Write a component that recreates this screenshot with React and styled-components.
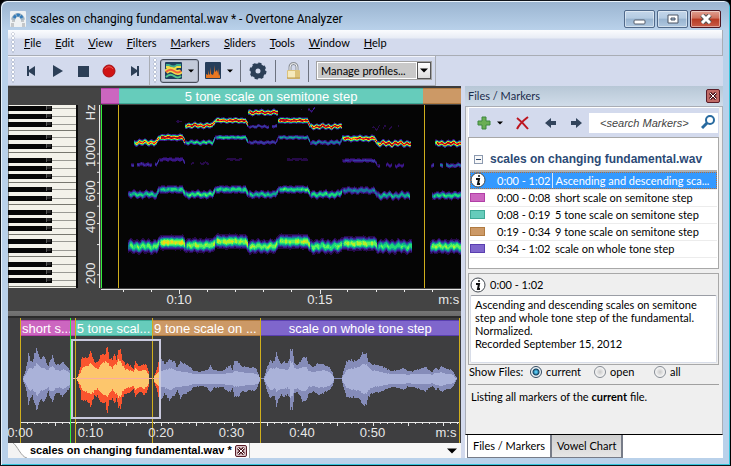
import React, { useState } from 'react';
import styled, { createGlobalStyle } from 'styled-components';

const palette = {
  frame: '#b9d1ea',
  bar: '#d3daed',
  line: '#a9adb5',
  dark: '#444444',
  plot: '#050505',
  navy: '#2c3f57',
  gold: '#cfae1c',
  green: '#34f03c',
};

const markerColors = {
  pink: ['#cc66c0', '#b23fa6'],
  teal: ['#66ccbb', '#3fa896'],
  orange: ['#cc9966', '#b07a40'],
  purple: ['#7f66cc', '#5a3fb0'],
};

const chartFont = `'Liberation Sans', Arial, sans-serif`;

const GlobalStyle = createGlobalStyle`
  * {
    box-sizing: border-box;
  }

  body {
    margin: 0;
    background-color: #000;
    font-family: Lato, sans-serif;
    font-size: 11px;
    color: #000;
  }

  button, input, select {
    margin: 0;
    font: inherit;
    color: inherit;
  }
`;

/* window frame */

const WindowFrame = styled.div`
  display: flex;
  flex-direction: column;
  min-height: 100vh;
  padding: 0 7px 7px 6px;
  border: 1px solid #10151c;
  border-right-color: #000;
  border-radius: 7px 7px 0 0;
  background: linear-gradient(#9ab4d0, ${palette.frame} 29px);
  box-shadow: inset 1px 1px 0 #e8f2fb, inset -1px -1px 0 #35c5dc;
`;

const TitleBar = styled.header`
  display: flex;
  align-items: center;
  height: 29px;
  gap: 4px;
  padding: 6px 2px 0 3px;
`;

const TitleText = styled.h1`
  flex: 1;
  margin: 0;
  font-family: Roboto, sans-serif;
  font-weight: 400;
  font-size: 12px;
  line-height: 18px;
  color: #000;
  white-space: nowrap;
`;

const WindowButtons = styled.div`
  display: flex;
  gap: 2px;
`;

const WindowButton = styled.button`
  display: grid;
  place-items: center;
  width: 31px;
  height: 18px;
  padding: 0;
  border: 1px solid ${props => (props.$close ? '#4d1520' : '#50698a')};
  border-radius: 2px;
  background: ${props =>
    props.$close
      ? 'linear-gradient(#e0a092, #d0705c 45%, #b83a22 50%, #c85c48)'
      : 'linear-gradient(#c3d6ea, #b4cbe2 45%, #98b4d0 50%, #b0c8e0)'};
  box-shadow: inset 0 0 0 1px rgba(255, 255, 255, 0.45);
`;

const WindowBody = styled.div`
  flex: 1;
  display: flex;
  flex-direction: column;
  margin-left: 1px;
  background-color: ${palette.bar};
`;

/* menu and toolbar */

const Grip = styled.span`
  align-self: stretch;
  width: 4px;
  margin: 2px 3px 2px 0;
  background-image: radial-gradient(circle, #fff 1px, #a4abbc 1px, transparent 2px);
  background-size: 4px 4px;
`;

const MenuBar = styled.nav`
  display: flex;
  align-items: center;
  height: 26px;
  gap: 14px;
  padding: 0 3px;
  border: 1px solid ${palette.line};
  border-width: 0 1px 1px 0;
  background: linear-gradient(#fbfcfe, #e8ecf5 8px, ${palette.bar} 9px);
`;

const MenuItem = styled.button`
  padding: 0;
  border: 0;
  background: none;
  line-height: 16px;

  &::first-letter {
    text-decoration: underline;
  }
`;

const MenuGrip = styled(Grip)`
  margin-right: -5px;
`;

const ToolBars = styled.div`
  display: flex;
  height: 30px;
`;

const ToolBar = styled.div`
  display: flex;
  align-items: center;
  padding: 0 ${props => props.$end}px 0 3px;
  border: 1px solid ${palette.line};
  border-width: 0 1px 1px 0;
  box-shadow: inset 0 1px 0 #f2f4fa;
`;

const ToolButton = styled.button`
  display: flex;
  align-items: center;
  justify-content: center;
  gap: 6px;
  height: 24px;
  width: ${props => props.$width || 26}px;
  padding: 0;
  border: ${props => (props.$pressed ? '1px solid #454b58' : '0')};
  border-radius: 3px;
  background-color: ${props => (props.$pressed ? '#c3cad9' : 'transparent')};
  box-shadow: ${props =>
    props.$pressed ? 'inset 0 0 0 1px #a9b0c0' : 'none'};
`;

const Separator = styled.span`
  width: 1px;
  height: 22px;
  margin: 0 ${props => props.$space || 0}px;
  background-color: #6d7380;
`;

const ProfileBox = styled.span`
  display: flex;
  height: 19px;
  margin-left: 7px;
  border: 1px solid #a2a2a2;
  background-color: #fff;
`;

const ProfileSelect = styled.select`
  width: 100px;
  padding: 0 0 0 3px;
  border: 1px solid #fff;
  border-radius: 0;
  appearance: none;
  background-color: #c9c9c9;
  line-height: 14px;
`;

const SelectArrow = styled.span`
  display: grid;
  place-items: center;
  width: 14px;
  border: 1px solid #555;
  background: linear-gradient(#fff, #dcdcdc);
`;

/* main area */

const MainArea = styled.div`
  flex: 1;
  display: flex;
  gap: 4px;
`;

const DocumentPane = styled.main`
  flex: 453 1 0;
  min-width: 0;
  display: flex;
  flex-direction: column;
`;

const SpectrumPane = styled.section`
  flex: 225 1 225px;
  display: grid;
  grid-template-columns: 70px 23px 1fr;
  grid-template-rows: 17px minmax(0, 1fr) 23px;
  background-color: ${palette.dark};
  border-top: 2px solid #3c3c3c;
`;

const MarkerStrip = styled.div`
  display: flex;
  grid-column: 3;
  height: 16px;
`;

const Marker = styled.div`
  flex: ${props => props.$span} 1 0;
  min-width: 0;
  padding-left: ${props => (props.$center ? 0 : 1)}px;
  border: 1px solid ${props => markerColors[props.$color][1]};
  border-width: 1px 0;
  background-color: ${props => markerColors[props.$color][0]};
  font-family: ${chartFont};
  font-size: 13px;
  line-height: 15px;
  color: #fff;
  text-align: ${props => (props.$center ? 'center' : 'left')};
  white-space: nowrap;
`;

const ChartSvg = styled.svg`
  display: block;
  width: 100%;
  height: 100%;
  min-height: 0;
  font-family: ${chartFont};
  font-size: 13px;
  fill: #e8e8e8;
`;

const PlotCell = styled.div`
  position: relative;
  grid-row: ${props => props.$row};
  grid-column: ${props => props.$column};
`;

const OverlaySvg = styled(ChartSvg)`
  position: absolute;
  inset: 0;
`;

const Splitter = styled.div`
  height: 7px;
  background: linear-gradient(#757575, #6c6c6c 5px, #2b2b2b 5px);
`;

const WavePane = styled.section`
  position: relative;
  flex: 125 1 125px;
  padding: 2px 2px 0 13px;
  background-color: #3e3e40;
`;

const DocumentTabs = styled.footer`
  display: flex;
  align-items: center;
  height: 15px;
  background-color: #f7f7f7;
`;

const DocumentTab = styled.div`
  display: flex;
  align-items: center;
  gap: 3px;
  height: 15px;
  padding-right: 2px;
  border-right: 1px solid #a5a5a5;
  background-color: #fff;
`;

const TabName = styled.strong`
  font-family: ${chartFont};
  line-height: 15px;
  color: #000;
  white-space: nowrap;
`;

const CloseButton = styled.button`
  display: grid;
  place-items: center;
  width: ${props => props.$size || 12}px;
  height: ${props => props.$size || 12}px;
  padding: 0;
  border: 1px solid #5a1c28;
  border-radius: 2px;
  background-color: ${props => (props.$red ? '#c06a66' : '#d8c0c4')};
`;

const TabListButton = styled.button`
  margin-left: auto;
  margin-right: 4px;
  padding: 0;
  border: 0;
  background: none;
  line-height: 0;
`;

/* side panel */

const SidePanel = styled.aside`
  flex: 258 1 0;
  min-width: 0;
  display: flex;
  flex-direction: column;
`;

const PanelHeader = styled.div`
  display: flex;
  align-items: center;
  justify-content: space-between;
  height: 20px;
  padding: 0 3px;
  background: linear-gradient(#b7c7d6, #d0dce9);
  color: #1b2c4c;
`;

const PanelTitle = styled.h2`
  margin: 0;
  font-weight: 400;
  font-size: 11px;
  line-height: 16px;
`;

const PanelBody = styled.div`
  flex: 1;
  display: flex;
  flex-direction: column;
  padding: 0 3px 0 2px;
  border: 1px solid ${palette.line};
  border-bottom-color: #000;
  background-color: #efefef;
`;

const PanelTools = styled.div`
  display: flex;
  align-items: center;
  height: 30px;
  padding: 0 1px 0 4px;
  border: 1px solid #fff;
  border-width: 1px 0 0 1px;
  background-color: ${palette.bar};
`;

const SearchBox = styled.label`
  flex: 1;
  display: flex;
  align-items: center;
  min-width: 0;
  height: 20px;
  padding-right: 2px;
  background-color: #fff;
`;

const SearchInput = styled.input`
  flex: 1;
  min-width: 0;
  padding: 0 0 0 11px;
  border: 0;
  outline: 0;
  background: none;
  font-family: ${chartFont};

  &::placeholder {
    font-style: italic;
    color: #444;
    opacity: 1;
  }
`;

const ListBox = styled.section`
  min-height: 132px;
  padding: 8px 1px 0;
  border: 1px solid #a8a8a8;
  background-color: #fff;
`;

const GroupHeader = styled.div`
  display: flex;
  align-items: center;
  gap: 7px;
  height: 26px;
  padding: 2px 0 0 4px;
  border-bottom: 2px solid #b0b0b0;
`;

const CollapseButton = styled.button`
  display: grid;
  place-items: center;
  width: 9px;
  height: 9px;
  padding: 0;
  border: 1px solid #8c9ab0;
  background-color: #f8f8f8;
`;

const GroupName = styled.h3`
  margin: 0;
  font-family: ${chartFont};
  font-size: 12px;
  line-height: 16px;
  color: #2c4a75;
  white-space: nowrap;
`;

const MarkerTable = styled.table`
  width: 100%;
  table-layout: fixed;
  border-collapse: collapse;
`;

const MarkerRow = styled.tr`
  height: 17px;
  background-color: ${props => (props.$selected ? '#3399ff' : '#fff')};
  color: ${props => (props.$selected ? '#fff' : '#000')};
  outline: ${props => (props.$selected ? '1px dotted #b5703a' : 'none')};
  outline-offset: -1px;
`;

const MarkerCell = styled.td`
  width: ${props => (props.$width ? `${props.$width}px` : 'auto')};
  padding: 0 0 0 ${props => props.$indent || 0}px;
  border-bottom: 1px solid #ececec;
  border-right: ${props => (props.$divider ? '1px solid #d5e6fa' : '0')};
  line-height: 15px;
  white-space: nowrap;
`;

const Swatch = styled.span`
  display: block;
  width: 15px;
  height: 9px;
  border: 1px solid ${props => markerColors[props.$color][1]};
  background-color: ${props => markerColors[props.$color][0]};
`;

const DetailBox = styled.section`
  display: flex;
  flex-direction: column;
  margin-top: 4px;
  padding: 0 1px 1px;
  border: 1px solid #a8a8a8;
`;

const DetailTime = styled.div`
  display: flex;
  align-items: center;
  gap: 4px;
  height: 21px;
`;

const DetailText = styled.p`
  min-height: 68px;
  margin: 0;
  padding: 2px 4px;
  border: 1px solid #d8dde8;
  border-top-color: #9a9da5;
  border-radius: 2px;
  background-color: #fff;
  line-height: 13px;
  white-space: pre-line;
`;

const FilterGroup = styled.fieldset`
  display: flex;
  align-items: center;
  height: 20px;
  margin: 0;
  padding: 0 1px;
  border: 0;
  border-bottom: 1px solid #a0a0a0;
`;

const FilterTitle = styled.span`
  width: 61px;
`;

const FilterLabel = styled.label`
  display: flex;
  align-items: center;
  gap: 4px;
  width: ${props => props.$width}px;
`;

const Radio = styled.input`
  width: 12px;
  height: 12px;
  appearance: none;
  border: 1px solid #858b93;
  border-radius: 50%;
  background: radial-gradient(circle, #c8c8c8, #f5f5f5 65%);

  &:checked {
    border-color: #34495f;
    background: radial-gradient(circle, #55c6f0 1px, #10405f 3px, #f0f5f8 4px);
  }
`;

const ListInfo = styled.p`
  margin: 0;
  padding: 4px 3px;
  line-height: 16px;
`;

const PanelTabs = styled.div`
  display: flex;
  height: 23px;
  padding-left: 2px;
  background-color: #fff;
`;

const PanelTab = styled.button`
  padding: 0 5px;
  border: 1px solid #777c88;
  border-width: 0 2px 1px ${props => (props.$active ? 1 : 0)}px;
  background: ${props =>
    props.$active ? '#fff' : 'linear-gradient(#cfcfcf, #e6e6e6)'};
  line-height: 16px;
  white-space: nowrap;
`;

/* spectrogram */

const noise = (x, seed) => {
  const value = Math.sin(x * 12.9898 + seed * 78.233) * 43758.5453;
  return value - Math.floor(value);
};

// [from, to, y, strength, thickness, wobble, dropout]
const partials = [
  [74, 83, 16, 0.14, 1.3, 0, 0.3],
  [84, 114, 20, 1, 2, 0.8, 0],
  [114, 147, 15, 1, 2, 0.5, 0],
  [147, 176, 21, 0.28, 1.6, 0.8, 0.15],
  [177, 209, 15, 1.05, 2.1, 0.3, 0],
  [209, 241, 21, 1, 2, 0.9, 0],
  [147, 177, 7, 1, 2, 0.7, 0],
  [200, 214, 5, 0.2, 1.2, 2, 0.5],
  [270, 298, 22, 0.14, 1.2, 2, 0.6],
  [33, 58, 37, 0.88, 2.2, 1, 0],
  [58, 84, 32, 1.1, 2.3, 0.4, 0],
  [84, 114, 37, 0.52, 1.9, 0.8, 0],
  [114, 147, 32, 0.5, 1.9, 0.3, 0],
  [147, 177, 37, 0.28, 1.8, 0.6, 0],
  [177, 209, 32, 0.43, 1.8, 0.4, 0],
  [209, 241, 37, 0.37, 2, 0.8, 0],
  [241, 276, 33, 0.95, 2.2, 0.6, 0],
  [276, 310, 38, 1, 2.2, 1.2, 0],
  [334, 360, 38, 1, 2.2, 0.9, 0],
  [28, 58, 59, 0.25, 1.9, 0.7, 0.35],
  [58, 84, 54, 0.22, 2, 0.3, 0],
  [84, 114, 58, 0.13, 1.5, 1, 0.6],
  [125, 147, 54, 0.13, 1.5, 0.3, 0.2],
  [182, 209, 54, 0.13, 1.7, 0.3, 0.25],
  [241, 276, 55, 0.25, 2, 0.4, 0],
  [276, 304, 60, 0.2, 2, 1.2, 0.3],
  [330, 360, 60, 0.34, 2, 0.7, 0.25],
  [27, 58, 89, 0.48, 3, 1, 0],
  [58, 84, 84, 0.5, 3.1, 0.4, 0],
  [84, 114, 89, 0.55, 3, 0.9, 0],
  [114, 147, 84, 0.5, 3.1, 0.5, 0],
  [147, 177, 89, 0.46, 2.9, 0.8, 0],
  [177, 209, 84, 0.52, 3, 0.4, 0],
  [209, 241, 89, 0.5, 3, 1, 0],
  [241, 276, 85, 0.38, 3, 0.8, 0],
  [276, 309, 90, 0.45, 3, 1.3, 0],
  [331, 360, 90, 0.5, 3, 0.8, 0],
  [27, 58, 141, 0.58, 5, 1.2, 0],
  [58, 84, 137, 0.72, 5.2, 0.3, 0],
  [84, 114, 140, 0.64, 5.1, 0.8, 0],
  [114, 147, 136, 0.67, 5.2, 0.5, 0],
  [147, 177, 141, 0.6, 5, 1, 0],
  [177, 209, 136, 0.65, 5.2, 0.4, 0],
  [209, 241, 141, 0.58, 5.1, 1.2, 0],
  [241, 276, 138, 0.64, 5.1, 0.5, 0],
  [276, 311, 141, 0.54, 5, 1.3, 0],
  [329, 360, 141, 0.6, 5.1, 1, 0],
];

const heat = [
  '#12051f', '#260a48', '#38178a', '#353d9e', '#17789a', '#0eab8c',
  '#1fd978', '#5cf25c', '#b5ee2b', '#f7d414', '#f8701a', '#e8181c', '#a80a14',
];

const buildSpectrum = () => {
  const paths = heat.map(() => '');
  partials.forEach(([from, to, y, strength, thickness, wobble, dropout], index) => {
    const next = partials[index + 1];
    const slope = next && next[0] === to ? next[2] - y : 0;
    for (let x = from; x < to; x += 1) {
      const hidden = noise(Math.floor(x / 3), index) < dropout;
      const edge = Math.min(1, 0.6 + (x - from) * 0.2);
      const glide = Math.max(0, 3 - (to - x)) / 3;
      const center =
        y +
        slope * glide +
        wobble * 0.8 * Math.sin(x * 1.05 + index) +
        wobble * 0.5 * Math.sin(x * 0.43 + index * 2);
      const peak = strength * edge * (0.88 + noise(Math.floor(x / 2), index + 3) * 0.2);
      const reach = Math.ceil(thickness * 1.7);
      for (let dy = -reach; dy <= reach && !hidden; dy += 1) {
        const row = Math.round(center) + dy;
        const distance = (row - center) / thickness;
        const value = peak * Math.exp(-distance * distance);
        const level = Math.min(heat.length - 1, Math.floor(value * 13));
        if (level > 0) paths[level] += `M${x} ${row}h1v1h-1z`;
      }
    }
  });
  return paths;
};

const spectrum = buildSpectrum();

const Spectrogram = () => (
  <ChartSvg viewBox='0 0 360 183' preserveAspectRatio='none'>
    <rect width='360' height='183' fill={palette.plot} />
    <g shapeRendering='crispEdges'>
      {spectrum.map((d, index) => (
        <path key={heat[index]} d={d} fill={heat[index]} />
      ))}
      <rect width='1' height='183' fill={palette.green} />
      <rect x='17' width='1' height='183' fill={palette.gold} />
      <rect x='323' width='1' height='183' fill={palette.gold} />
    </g>
  </ChartSvg>
);

/* keyboard */

const blackKeys = [3, 11, 19, 32, 41, 55, 63, 71, 84, 93, 107, 115, 123, 136, 145, 159, 167, 175];
const whiteGaps = [25, 47, 77, 99, 129, 151, 181];

const Keyboard = () => (
  <ChartSvg viewBox='0 0 70 183' preserveAspectRatio='none' shapeRendering='crispEdges'>
    <rect width='70' height='183' fill='#0a0a0a' />
    <rect width='68' height='183' fill='#f3f2ea' />
    <rect width='1' height='183' fill='#8a8a84' />
    {whiteGaps.map(y => (
      <rect key={y} y={y} width='68' height='1' fill='#77776f' />
    ))}
    {blackKeys.map(y => (
      <g key={y}>
        <rect x='40' y={y} width='28' height='1' fill='#9a9a94' />
        <rect y={y - 2} width='44' height='5' fill='#060606' />
        <rect x='38' y={y - 2} width='1' height='4' fill='#5a5a5a' />
        <rect x='39' y={y - 2} width='4' height='3' fill='#242424' />
      </g>
    ))}
  </ChartSvg>
);

const pitchLabels = [
  ['Hz', 4],
  ['1000', 26],
  ['600', 47],
  ['400', 64],
  ['200', 92],
];
const pitchTicks = [26.5, 31.5, 36.5, 42, 48, 55, 64.5, 76, 92.5];

const PitchAxis = () => (
  <ChartSvg>
    {pitchLabels.map(([label, y]) => (
      <svg key={label} x='13' y={`${y}%`} overflow='visible'>
        <text transform='rotate(-90)' textAnchor='middle' y='4'>
          {label}
        </text>
      </svg>
    ))}
    {pitchTicks.map(y => (
      <rect key={y} x='19' y={`${y}%`} width='3' height='1' />
    ))}
    <rect x='21' width='1' height='100%' />
  </ChartSvg>
);

const TimeAxis = () => (
  <ChartSvg shapeRendering='crispEdges'>
    <rect y='1' width='100%' height='1' />
    {[22, 50, 106, 134, 162, 190, 246, 275, 303, 331].map(x => (
      <rect key={x} x={`${x / 3.6}%`} y='2' width='1' height='2' />
    ))}
    {[78, 219].map(x => (
      <rect key={x} x={`${x / 3.6}%`} y='2' width='1' height='4' />
    ))}
    <text x='21.7%' y='16' textAnchor='middle'>0:10</text>
    <text x='60.8%' y='16' textAnchor='middle'>0:15</text>
    <text x='99.5%' y='16' textAnchor='end'>m:s</text>
  </ChartSvg>
);

/* waveform, [x, outer, inner] */

const waveLeft = [
  [14, 0, 0], [17, 8, 4], [19, 17, 8], [20, 25, 10], [22, 19, 12], [24, 16, 10],
  [26, 25, 13], [28, 30, 15], [29, 29, 16], [31, 22, 13], [33, 20, 11], [35, 24, 12],
  [37, 19, 10], [40, 13, 9], [42, 19, 12], [44, 24, 13], [46, 17, 11], [48, 14, 9],
  [51, 14, 8], [54, 18, 10], [57, 14, 9], [60, 11, 7], [62, 7, 5],
];
const waveSelected = [
  [63, 0, 0], [68, 0, 0], [69, 2, 2], [72, 12, 6], [73, 22, 10], [76, 22, 13],
  [78, 20, 12], [81, 25, 15], [82, 29, 16], [84, 22, 14], [86, 17, 12], [89, 17, 10],
  [92, 23, 13], [94, 25, 16], [97, 24, 17], [98, 31, 17], [99, 33, 17], [101, 21, 14],
  [104, 20, 11], [106, 25, 14], [108, 20, 15], [110, 28, 19], [112, 30, 18], [114, 19, 13],
  [117, 15, 10], [120, 15, 9], [125, 10, 7], [127, 18, 11], [130, 14, 9], [132, 13, 8],
  [135, 16, 10], [138, 14, 8], [140, 8, 5], [141, 0, 0], [145, 0, 0], [146, 4, 3],
  [148, 9, 5], [150, 17, 7], [152, 22, 8],
];
const waveRight = [
  [152, 22, 8], [154, 19, 8], [156, 15, 9], [159, 18, 10], [161, 21, 11], [163, 19, 11],
  [166, 17, 9], [169, 11, 8], [172, 19, 8], [174, 16, 7], [179, 14, 7], [182, 12, 6],
  [185, 8, 5], [192, 7, 5], [199, 9, 5], [202, 13, 5], [205, 9, 5], [214, 8, 5],
  [219, 12, 6], [222, 13, 6], [224, 9, 6], [226, 18, 8], [229, 18, 8], [231, 16, 7],
  [234, 12, 7], [237, 13, 6], [241, 11, 6], [245, 12, 6], [248, 10, 5], [250, 5, 4],
  [252, 0, 0], [255, 0, 0], [257, 6, 3], [259, 13, 7], [262, 19, 11], [264, 17, 11],
  [266, 18, 10], [268, 27, 12], [270, 20, 11], [273, 16, 10], [276, 18, 10],
  [279, 16, 9], [281, 19, 11], [282, 30, 18], [284, 30, 17], [286, 15, 11], [289, 14, 10],
  [292, 17, 11], [294, 22, 12], [298, 22, 12], [300, 15, 8], [305, 12, 7], [309, 15, 8],
  [313, 16, 9], [317, 13, 8], [321, 12, 7], [324, 7, 4], [326, 0, 0], [333, 0, 0],
  [335, 8, 4], [338, 18, 9], [342, 19, 10], [346, 18, 11], [351, 20, 12], [354, 26, 15],
  [358, 26, 15], [360, 18, 12], [363, 15, 9], [367, 14, 8], [372, 13, 7], [377, 11, 6],
  [383, 8, 5], [389, 9, 5], [395, 11, 5], [399, 8, 4], [405, 8, 5], [411, 10, 5],
  [417, 12, 5], [421, 9, 5], [424, 7, 4], [427, 11, 6], [430, 9, 6], [433, 13, 7],
  [438, 10, 5], [442, 10, 5], [445, 7, 4], [447, 3, 1], [449, 0, 0], [451, 0, 0],
];

const buildWave = (points, column) => {
  let upper = '';
  const lower = [];
  const middle = 61;
  let segment = 0;
  const first = points[0][0];
  const last = points[points.length - 1][0];
  for (let x = first; x < last; x += 1) {
    while (points[segment + 1][0] <= x) segment += 1;
    const a = points[segment];
    const b = points[segment + 1];
    const t = (x - a[0]) / (b[0] - a[0]);
    const size = a[column] + (b[column] - a[column]) * t;
    const top = middle - Math.round(size * (0.93 + noise(x, 1) * 0.12));
    const bottom = middle + Math.round(size * (0.93 + noise(x, 5) * 0.12));
    upper += `L${x} ${top}H${x + 1}`;
    lower.unshift(`L${x + 1} ${bottom}H${x}`);
  }
  return `M${first} ${middle}${upper}${lower.join('')}Z`;
};

const waves = [
  [waveLeft, '#858cb9', '#aab2d9'],
  [waveSelected, '#fa542e', '#fdc66c'],
  [waveRight, '#858cb9', '#aab2d9'],
];

const secondTicks = Array.from({ length: 62 }, (_, index) => index + 1);
const secondLabels = [['0:00', 0], ['0:10', 10], ['0:20', 20], ['0:30', 30], ['0:40', 40], ['0:50', 50]];

const Waveform = () => (
  <OverlaySvg>
    <svg viewBox='0 0 453 125' preserveAspectRatio='none' width='100%' height='100%'>
      <g shapeRendering='crispEdges'>
        {waves.map(([points, outer, inner], index) => (
          <g key={index}>
            <path d={buildWave(points, 1)} fill={outer} />
            <path d={buildWave(points, 2)} fill={inner} />
          </g>
        ))}
        <rect x='63' y='60' width='89' height='1' fill='#f8b0a0' />
        <rect x='252' y='60' width='4' height='1' fill='#858cb9' />
        <rect x='326' y='60' width='8' height='1' fill='#858cb9' />
        <rect x='12' y='104' width='440' height='1' />
        {secondTicks.map(second => (
          <rect
            key={second}
            x={Math.round(12 + second * 7.05)}
            y='105'
            width='1'
            height={second % 5 ? 1 : 3}
          />
        ))}
        {[12, 67, 144, 252, 451].map(x => (
          <rect key={x} x={x} width='1' height='125' fill={palette.gold} />
        ))}
        <rect x='62' width='1' height='125' fill={palette.green} />
        <rect x='64' y='22' width='88' height='78' fill='none' stroke='#c9c9de' strokeWidth='2' />
      </g>
    </svg>
    {secondLabels.map(([label, second]) => (
      <text key={label} x={`${(12 + second * 7.05) / 4.53}%`} y='119' textAnchor='middle'>
        {label}
      </text>
    ))}
    <text x='99%' y='119' textAnchor='end'>m:s</text>
  </OverlaySvg>
);

/* icons */

const Arrow = ({ width = 6 }) => (
  <svg width={width} height={width / 2 + 1} viewBox='0 0 8 4'>
    <path d='M0 0h8L4 4z' fill='#000' />
  </svg>
);

const LogoIcon = () => (
  <svg width='16' height='16' viewBox='0 0 16 16'>
    <rect width='16' height='16' rx='1' fill='#eef1f3' />
    <path d='M1 13h3M2 10h3M11 10h3M12 13h3M1 15h3M12 15h3' stroke='#9a9da0' />
    <path d='M3 9c1-4 2-5 5-5s4 1 5 5' fill='none' stroke='#9fb4c4' strokeWidth='4' />
    <path d='M4 7c1-2 2-3 4-3s3 1 4 3' fill='none' stroke='#347cba' strokeWidth='3' strokeDasharray='3 1' />
  </svg>
);

const MinimizeIcon = () => (
  <svg width='13' height='14' viewBox='0 0 13 14'>
    <rect x='1' y='8' width='11' height='4' rx='1' fill='#fff' stroke='#555d6b' />
  </svg>
);

const MaximizeIcon = () => (
  <svg width='12' height='10' viewBox='0 0 12 10'>
    <path fillRule='evenodd' d='M1 1h10v8H1zM4 4v2h4V4z' fill='#fff' stroke='#4b5464' />
  </svg>
);

const CloseIcon = () => (
  <svg width='12' height='10' viewBox='0 0 12 10'>
    <path d='M2 1l8 8M10 1L2 9' stroke='#555' strokeWidth='5' />
    <path d='M2 1l8 8M10 1L2 9' stroke='#fff' strokeWidth='3' />
  </svg>
);

const SmallCloseIcon = () => (
  <svg width='8' height='8' viewBox='0 0 8 8'>
    <path d='M1 1l6 6M7 1L1 7' stroke='#431017' strokeWidth='3' />
    <path d='M1 1l6 6M7 1L1 7' stroke='#fff' strokeWidth='1' />
  </svg>
);

const TransportIcon = ({ type }) => (
  <svg width='14' height='14' viewBox='0 0 14 14' fill={palette.navy}>
    {type === 'previous' && <path d='M3 2h2v4l6-4v10L5 8v4H3z' />}
    {type === 'play' && <path d='M3 1l10 6-10 6z' />}
    {type === 'stop' && <rect x='2' y='2' width='11' height='11' />}
    {type === 'record' && (
      <>
        <circle cx='7' cy='7' r='6' fill='#d01414' stroke='#a51015' />
        <path d='M3 5c2-3 6-3 8 0' stroke='#e85a55' fill='none' />
      </>
    )}
    {type === 'next' && <path d='M11 2H9v4L3 2v10l6-4v4h2z' />}
  </svg>
);

const SpectrogramIcon = () => (
  <svg width='17' height='17' viewBox='0 0 17 17' fill='none'>
    <rect width='17' height='17' rx='1' fill='#20405f' />
    <path d='M1 3h3q5 3 8 0h4' stroke='#3cae90' strokeWidth='2' />
    <path d='M1 5h3q5 3 8 0h4' stroke='#f0de45' strokeWidth='2' />
    <path d='M1 10q4-4 8-1t7 0' stroke='#f3dc4c' strokeWidth='5' />
    <path d='M1 10q4-4 8-1t7 0' stroke='#f0603c' strokeWidth='2' />
    <path d='M1 15q4-4 8-1t7 0' stroke='#52c78e' strokeWidth='2' />
  </svg>
);

const SpectrumIcon = () => (
  <svg width='16' height='17' viewBox='0 0 16 17'>
    <rect width='16' height='17' rx='1' fill='#263e5b' />
    <path d='M1 16v-4l2 1V8l1 5 1-1V5l1 7 2 1 1-3V3l1 7 2-2 1 3V6l1 8 1-2v4z' fill='#e87722' />
  </svg>
);

const GearIcon = () => (
  <svg width='18' height='18' viewBox='0 0 18 18'>
    <circle cx='9' cy='9' r='5' fill='none' stroke={palette.navy} strokeWidth='5' />
    <circle cx='9' cy='9' r='7' fill='none' stroke={palette.navy} strokeWidth='3' strokeDasharray='3 2.5' />
  </svg>
);

const LockIcon = () => (
  <svg width='15' height='18' viewBox='0 0 15 18'>
    <path d='M4 9V5a3 3 0 0 1 7 0v4' fill='none' stroke='#8d9299' strokeWidth='3' />
    <path d='M4 9V5a3 3 0 0 1 7 0v4' fill='none' stroke='#f4f5f6' strokeWidth='1' />
    <rect x='1' y='8' width='13' height='9' rx='1' fill='#dcc27a' />
    <path d='M2 9h7v7H2z' fill='#f5e9bd' />
    <path d='M1 16h13' stroke='#b9984f' />
  </svg>
);

const AddIcon = () => (
  <svg width='14' height='14' viewBox='0 0 14 14'>
    <path d='M5 1h4v4h4v4H9v4H5V9H1V5h4z' fill='#6aae54' stroke='#3d873e' />
  </svg>
);

const DeleteIcon = () => (
  <svg width='15' height='14' viewBox='0 0 15 14'>
    <path d='M2 2c4 3 7 6 11 11M13 1C9 4 5 7 2 13' fill='none' stroke='#bd1620' strokeWidth='2' />
  </svg>
);

const MoveIcon = ({ forward }) => (
  <svg width='13' height='12' viewBox='0 0 13 12'>
    <path
      d={forward ? 'M12 6L6 1v3H1v4h5v3z' : 'M1 6l6-5v3h5v4H7v3z'}
      fill='#32445c'
    />
  </svg>
);

const SearchIcon = () => (
  <svg width='15' height='15' viewBox='0 0 15 15' fill='none' stroke='#286a9f'>
    <circle cx='9' cy='5' r='4' strokeWidth='2' />
    <path d='M6 8l-5 5' strokeWidth='3' />
  </svg>
);

const InfoSvg = styled.svg`
  display: block;
`;

const InfoIcon = () => (
  <InfoSvg width='16' height='16' viewBox='0 0 16 16'>
    <circle cx='8' cy='8' r='7' fill='#fff' stroke='#444a52' />
    <circle cx='9' cy='4' r='1' fill='#111' />
    <path d='M6 7h3l-1 5h2' fill='none' stroke='#111' strokeWidth='2' />
  </InfoSvg>
);

const TabSlope = () => (
  <svg width='19' height='15' viewBox='0 0 19 15'>
    <path d='M0 0h5c4 2 8 14 14 15H0z' fill='#f3f3f3' />
    <path d='M5 0c4 2 8 14 14 15' fill='none' stroke='#a0a0a0' />
  </svg>
);

const menus = ['File', 'Edit', 'View', 'Filters', 'Markers', 'Sliders', 'Tools', 'Window', 'Help'];
const transport = ['previous', 'play', 'stop', 'record', 'next'];

const markers = [
  { time: '0:00 - 1:02', name: 'Ascending and descending sca...' },
  { time: '0:00 - 0:08', name: 'short scale on semitone step', color: 'pink' },
  { time: '0:08 - 0:19', name: '5 tone scale on semitone step', color: 'teal' },
  { time: '0:19 - 0:34', name: '9 tone scale on semitone step', color: 'orange' },
  { time: '0:34 - 1:02', name: 'scale on whole tone step', color: 'purple' },
];

const filters = [
  ['current', 64],
  ['open', 60],
  ['all', 40],
];

const FilesPanel = () => {
  const [selected, setSelected] = useState(0);
  const [filter, setFilter] = useState('current');

  return (
    <SidePanel>
      <PanelHeader>
        <PanelTitle>Files / Markers</PanelTitle>
        <CloseButton $size={14} $red aria-label='Close panel'>
          <SmallCloseIcon />
        </CloseButton>
      </PanelHeader>
      <PanelBody>
        <PanelTools>
          <ToolButton $width={34} aria-label='Add marker'>
            <AddIcon />
            <Arrow />
          </ToolButton>
          <ToolButton $width={30} aria-label='Delete marker'>
            <DeleteIcon />
          </ToolButton>
          <ToolButton aria-label='Previous marker'>
            <MoveIcon />
          </ToolButton>
          <ToolButton aria-label='Next marker'>
            <MoveIcon forward />
          </ToolButton>
          <SearchBox>
            <SearchInput placeholder='<search Markers>' aria-label='Search markers' />
            <SearchIcon />
          </SearchBox>
        </PanelTools>
        <ListBox>
          <GroupHeader>
            <CollapseButton aria-label='Collapse'>
              <svg width='5' height='1'>
                <rect width='5' height='1' fill='#2c4a75' />
              </svg>
            </CollapseButton>
            <GroupName>scales on changing fundamental.wav</GroupName>
          </GroupHeader>
          <MarkerTable>
            <tbody>
              {markers.map((marker, index) => (
                <MarkerRow
                  key={marker.time}
                  $selected={selected === index}
                  onClick={() => setSelected(index)}
                >
                  <MarkerCell $width={27}>
                    {marker.color ? <Swatch $color={marker.color} /> : <InfoIcon />}
                  </MarkerCell>
                  <MarkerCell $width={55} $divider={selected === index}>
                    {marker.time}
                  </MarkerCell>
                  <MarkerCell $indent={3}>{marker.name}</MarkerCell>
                </MarkerRow>
              ))}
            </tbody>
          </MarkerTable>
        </ListBox>
        <DetailBox>
          <DetailTime>
            <InfoIcon />
            0:00 - 1:02
          </DetailTime>
          <DetailText>
            {`Ascending and descending scales on semitone
            step and whole tone step of the fundamental.
            Normalized.
            Recorded September 15, 2012`}
          </DetailText>
        </DetailBox>
        <FilterGroup>
          <FilterTitle>Show Files:</FilterTitle>
          {filters.map(([name, width]) => (
            <FilterLabel key={name} $width={width}>
              <Radio
                type='radio'
                name='files'
                checked={filter === name}
                onChange={() => setFilter(name)}
              />
              {name}
            </FilterLabel>
          ))}
        </FilterGroup>
        <ListInfo>
          Listing all markers of the <strong>{filter}</strong> file.
        </ListInfo>
      </PanelBody>
      <PanelTabs>
        <PanelTab $active>Files / Markers</PanelTab>
        <PanelTab>Vowel Chart</PanelTab>
      </PanelTabs>
    </SidePanel>
  );
};

const App = () => {
  return (
    <WindowFrame>
      <GlobalStyle />
      <TitleBar>
        <LogoIcon />
        <TitleText>scales on changing fundamental.wav * - Overtone Analyzer</TitleText>
        <WindowButtons>
          <WindowButton aria-label='Minimize'>
            <MinimizeIcon />
          </WindowButton>
          <WindowButton aria-label='Maximize'>
            <MaximizeIcon />
          </WindowButton>
          <WindowButton $close aria-label='Close'>
            <CloseIcon />
          </WindowButton>
        </WindowButtons>
      </TitleBar>
      <WindowBody>
        <MenuBar>
          <MenuGrip />
          {menus.map(menu => (
            <MenuItem key={menu}>{menu}</MenuItem>
          ))}
        </MenuBar>
        <ToolBars>
          <ToolBar $end={1}>
            <Grip />
            {transport.map(type => (
              <ToolButton key={type} aria-label={type}>
                <TransportIcon type={type} />
              </ToolButton>
            ))}
          </ToolBar>
          <ToolBar $end={3}>
            <Grip />
            <ToolButton $width={39} $pressed aria-label='Spectrogram'>
              <SpectrogramIcon />
              <Arrow />
            </ToolButton>
            <ToolButton $width={39} aria-label='Spectrum'>
              <SpectrumIcon />
              <Arrow />
            </ToolButton>
            <Separator $space={2} />
            <ToolButton $width={30} aria-label='Settings'>
              <GearIcon />
            </ToolButton>
            <Separator $space={2} />
            <ToolButton $width={30} aria-label='Lock'>
              <LockIcon />
            </ToolButton>
            <Separator />
            <ProfileBox>
              <ProfileSelect aria-label='Profile'>
                <option>Manage profiles...</option>
              </ProfileSelect>
              <SelectArrow>
                <Arrow width={8} />
              </SelectArrow>
            </ProfileBox>
          </ToolBar>
        </ToolBars>
        <MainArea>
          <DocumentPane>
            <SpectrumPane>
              <MarkerStrip>
                <Marker $span={17} $color='pink' />
                <Marker $span={306} $color='teal' $center>
                  5 tone scale on semitone step
                </Marker>
                <Marker $span={37} $color='orange' />
              </MarkerStrip>
              <PlotCell $row={2} $column={1}>
                <Keyboard />
              </PlotCell>
              <PlotCell $row={2} $column={2}>
                <PitchAxis />
              </PlotCell>
              <PlotCell $row={2} $column={3}>
                <Spectrogram />
              </PlotCell>
              <PlotCell $row={3} $column={3}>
                <TimeAxis />
              </PlotCell>
            </SpectrumPane>
            <Splitter />
            <WavePane>
              <MarkerStrip>
                <Marker $span={54} $color='pink'>short s...</Marker>
                <Marker $span={77} $color='teal'>5 tone scal...</Marker>
                <Marker $span={108} $color='orange'>9 tone scale on ...</Marker>
                <Marker $span={199} $color='purple' $center>scale on whole tone step</Marker>
              </MarkerStrip>
              <Waveform />
            </WavePane>
            <DocumentTabs>
              <DocumentTab>
                <TabSlope />
                <TabName>scales on changing fundamental.wav *</TabName>
                <CloseButton aria-label='Close file'>
                  <SmallCloseIcon />
                </CloseButton>
              </DocumentTab>
              <TabListButton aria-label='Open files'>
                <Arrow width={10} />
              </TabListButton>
            </DocumentTabs>
          </DocumentPane>
          <FilesPanel />
        </MainArea>
      </WindowBody>
    </WindowFrame>
  );
};

export default App;
